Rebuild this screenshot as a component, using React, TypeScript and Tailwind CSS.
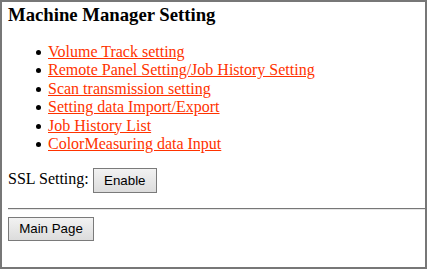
import React from "react";

const links = [
  "Volume Track setting",
  "Remote Panel Setting/Job History Setting",
  "Scan transmission setting",
  "Setting data Import/Export",
  "Job History List",
  "ColorMeasuring data Input",
];

export default function App() {
  return (
    <div className="w-[427px] h-[269px] border-2 border-[#777777] bg-white overflow-hidden text-black [font-family:'Liberation_Serif','Times_New_Roman',serif]">
      <div className="flex flex-col pl-[6px]">
        <h3 className="mt-[2px] text-[18.72px] font-bold leading-[22px]">Machine Manager Setting</h3>
        <ul className="mt-[17px] list-none pl-[40px] text-[16px] leading-[18.4px]">
          {links.map((l) => (
            <li key={l} className="relative">
              <span className="absolute left-[-12px] top-[7px] h-[5px] w-[5px] rounded-full bg-black" />
              <a href="#" className="text-[#ff3300] underline">
                {l}
              </a>
            </li>
          ))}
        </ul>
        <div className="mt-[15px] text-[16px] leading-[18.4px]">
          SSL Setting:{" "}
          <button className="h-[25px] w-[64px] border border-[#7a7a7a] bg-gradient-to-b from-[#f2f2f2] to-[#dcdcdc] text-[13.33px] [font-family:'Liberation_Sans',Arial,sans-serif] text-black align-baseline">
            Enable
          </button>
        </div>
        <div className="mt-[15px] h-[2px] border-t border-t-[#777777] border-b border-b-[#e6e6e6]" />
        <div className="mt-[6px]">
          <button className="h-[24px] w-[86px] border border-[#7a7a7a] bg-gradient-to-b from-[#f2f2f2] to-[#dcdcdc] text-[13.33px] [font-family:'Liberation_Sans',Arial,sans-serif] text-black">
            Main Page
          </button>
        </div>
      </div>
    </div>
  );
}
